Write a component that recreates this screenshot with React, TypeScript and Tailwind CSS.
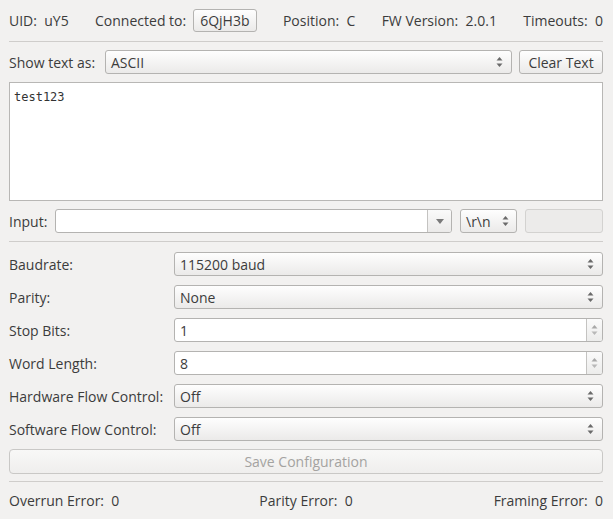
import React from "react";

const font = { fontFamily: '"Open Sans", "Noto Sans", sans-serif' };

// small up/down arrows as drawn by the Ubuntu Qt theme
const UpDown = ({ dim = false }: { dim?: boolean }) => (
  <svg width="7" height="12" viewBox="0 0 7 12" className="shrink-0">
    <path d="M3.5 1 L6.5 4.5 L0.5 4.5 Z" fill={dim ? "#a8a8a8" : "#6a6a6a"} />
    <path d="M3.5 11 L6.5 7.5 L0.5 7.5 Z" fill={dim ? "#b8b8b8" : "#6a6a6a"} />
  </svg>
);

const Combo = ({ value, className = "" }: { value: string; className?: string }) => (
  <div
    className={`h-[24px] flex items-center justify-between pl-[5px] pr-[8px] rounded-[3px] border border-[#b4b3b1] bg-gradient-to-b from-[#fefefe] to-[#ebeae9] text-[#3c3c3c] ${className}`}
  >
    <span>{value}</span>
    <UpDown />
  </div>
);

const Spin = ({ value }: { value: string }) => (
  <div className="h-[24px] flex-1 flex rounded-[3px] border border-[#b4b3b1] bg-white overflow-hidden">
    <div className="flex-1 flex items-center pl-[5px]">{value}</div>
    <div className="w-[16px] border-l border-[#c4c3c1] bg-gradient-to-b from-[#fafafa] to-[#ececeb] flex items-center justify-center">
      <UpDown dim />
    </div>
  </div>
);

const Sep = () => <div className="h-px bg-[#cfcdcb]" />;

const rows: [string, string, "combo" | "spin"][] = [
  ["Baudrate:", "115200 baud", "combo"],
  ["Parity:", "None", "combo"],
  ["Stop Bits:", "1", "spin"],
  ["Word Length:", "8", "spin"],
  ["Hardware Flow Control:", "Off", "combo"],
  ["Software Flow Control:", "Off", "combo"],
];

export default function App() {
  return (
    <div
      style={font}
      className="w-[613px] h-[519px] bg-[#f2f1f0] text-[#3c3c3c] text-[14px] pl-[9px] pr-[10px] flex flex-col overflow-hidden"
    >
      {/* status row */}
      <div className="h-[41px] flex items-center justify-between">
        <span>UID:&nbsp; uY5</span>
        <span className="flex items-center gap-[7px]">
          Connected to:
          <span className="h-[23px] px-[6px] flex items-center rounded-[3px] border border-[#b4b3b1] bg-gradient-to-b from-[#fefefe] to-[#ebeae9]">
            6QjH3b
          </span>
        </span>
        <span>Position:&nbsp; C</span>
        <span>FW Version:&nbsp; 2.0.1</span>
        <span>Timeouts:&nbsp; 0</span>
      </div>
      <Sep />

      <div className="mt-[8px] h-[24px] flex items-center gap-[7px]">
        <span className="w-[89px] shrink-0 whitespace-nowrap">Show text as:</span>
        <Combo value="ASCII" className="flex-1" />
        <button className="h-[24px] w-[84px] rounded-[3px] border border-[#b4b3b1] bg-gradient-to-b from-[#fefefe] to-[#ebeae9]">
          Clear Text
        </button>
      </div>

      <div className="mt-[8px] h-[119px] border border-[#b8b7b5] bg-white px-[4px] pt-[2px]">
        <span className="text-[12px] text-[#333]" style={{ fontFamily: '"DejaVu Sans Mono", monospace' }}>
          test123
        </span>
      </div>

      <div className="mt-[8px] h-[24px] flex items-center">
        <span className="w-[46px] shrink-0">Input:</span>
        <div className="h-[24px] w-[397px] flex rounded-[3px] border border-[#b4b3b1] bg-white overflow-hidden">
          <div className="flex-1" />
          <div className="w-[24px] border-l border-[#c4c3c1] bg-gradient-to-b from-[#fafafa] to-[#ebeae9] flex items-center justify-center">
            <svg width="8" height="5" viewBox="0 0 8 5">
              <path d="M0 0 L8 0 L4 5 Z" fill="#7a7a7a" />
            </svg>
          </div>
        </div>
        <div className="ml-[8px] h-[24px] w-[57px] flex items-center justify-between pl-[5px] pr-[7px] rounded-[3px] border border-[#b4b3b1] bg-gradient-to-b from-[#fefefe] to-[#ebeae9]">
          <span>\r\n</span>
          <UpDown />
        </div>
        <div className="ml-[8px] h-[24px] flex-1 rounded-[3px] border border-[#d3d2d0] bg-[#ecebea]" />
      </div>

      <div className="mt-[8px]">
        <Sep />
      </div>

      <div className="mt-[10px] flex flex-col gap-[9px]">
        {rows.map(([label, value, kind]) => (
          <div key={label} className="h-[24px] flex items-center">
            <span className="w-[165px] shrink-0 whitespace-nowrap">{label}</span>
            {kind === "combo" ? <Combo value={value} className="flex-1" /> : <Spin value={value} />}
          </div>
        ))}
      </div>

      <button
        disabled
        className="mt-[8px] h-[25px] w-full rounded-[4px] border border-[#c9c8c6] bg-gradient-to-b from-[#f8f8f7] to-[#efeeed] text-[#a4a3a1]"
      >
        Save Configuration
      </button>

      <div className="mt-[7px]">
        <Sep />
      </div>

      <div className="flex-1 grid grid-cols-3 items-center">
        <span>Overrun Error:&nbsp; 0</span>
        <span className="text-center">Parity Error:&nbsp; 0</span>
        <span className="text-right">Framing Error:&nbsp; 0</span>
      </div>
    </div>
  );
}
